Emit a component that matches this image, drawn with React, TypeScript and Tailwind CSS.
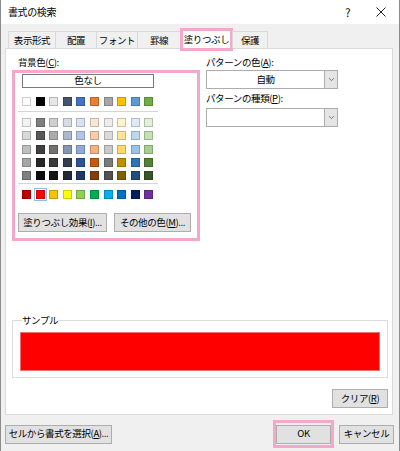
import { ChevronDown } from "lucide-react";

const themeRow = ["#ffffff", "#000000", "#e7e6e6", "#44546a", "#4472c4", "#ed7d31", "#a5a5a5", "#ffc000", "#5b9bd5", "#70ad47"];

const tintRows = [
  ["#f2f2f2", "#7f7f7f", "#d0cece", "#d6dce4", "#d9e2f3", "#fbe5d5", "#ededed", "#fff2cc", "#deebf6", "#e2efd9"],
  ["#d8d8d8", "#595959", "#aeabab", "#adb9ca", "#b4c6e7", "#f7cbac", "#dbdbdb", "#fee599", "#bdd7ee", "#c5e0b3"],
  ["#bfbfbf", "#3f3f3f", "#757070", "#8496b0", "#8eaadb", "#f4b183", "#c9c9c9", "#ffd965", "#9cc3e5", "#a8d08d"],
  ["#a5a5a5", "#262626", "#3a3838", "#323f4f", "#2f5496", "#c55a11", "#7b7b7b", "#bf9000", "#2e75b5", "#538135"],
  ["#7f7f7f", "#0c0c0c", "#171616", "#222a35", "#1f3864", "#833c0b", "#525252", "#7f6000", "#1e4e79", "#375623"],
];

const standardRow = ["#c00000", "#ff0000", "#ffc000", "#ffff00", "#92d050", "#00b050", "#00b0f0", "#0070c0", "#002060", "#7030a0"];

const tabs = [
  { label: "表示形式", w: "w-[48px]" },
  { label: "配置", w: "w-[42px]" },
  { label: "フォント", w: "w-[42px]" },
  { label: "罫線", w: "w-[44px]" },
  { label: "塗りつぶし", w: "w-[53px]", active: true },
  { label: "保護", w: "w-[36px]" },
];

function SwatchRow({ colors, selected }: { colors: string[]; selected?: number }) {
  return (
    <div className="flex gap-x-[4.6px] ml-[7px]">
      {colors.map((c, i) => (
        <div
          key={i}
          className={
            i === selected
              ? "w-[9px] h-[9px] border border-black/20 outline outline-1 outline-offset-1 outline-[#8fc1ea]"
              : "w-[9px] h-[9px] border border-black/20"
          }
          style={{ backgroundColor: c }}
        />
      ))}
    </div>
  );
}

function Button({ children, className }: { children: React.ReactNode; className?: string }) {
  return (
    <div
      className={
        "flex items-center justify-center bg-[#e1e1e1] border border-[#adadad] leading-none " +
        (className ?? "")
      }
    >
      {children}
    </div>
  );
}

function Select({ value }: { value?: string }) {
  return (
    <div className="flex w-[132px] h-[19px] bg-white border border-[#acacac]">
      <div className="flex-1 flex items-center justify-center">{value}</div>
      <div className="w-[13px] flex items-center justify-center bg-[#e5e5e5] border-l border-[#acacac]">
        <ChevronDown className="w-[9px] h-[9px] text-[#555]" strokeWidth={2} />
      </div>
    </div>
  );
}

export default function App() {
  return (
    <div className="w-[400px] h-[451px] bg-[#f0f0f0] border-x border-[#8c8c8c] text-[9.5px] tracking-[-0.4px] whitespace-nowrap text-black font-['Noto_Sans_CJK_JP','Noto_Sans',sans-serif] overflow-hidden">
      {/* title bar */}
      <div className="h-[24px] bg-white flex items-center pl-[7px]">
        <span className="leading-none text-[10px]">書式の検索</span>
        <span className="ml-auto mr-[26px] text-[11px] leading-none">?</span>
        <svg className="w-[10px] h-[10px] mr-[13px]" viewBox="0 0 10 10" stroke="#222" strokeWidth="1">
          <path d="M0.5 0.5 L9.5 9.5 M9.5 0.5 L0.5 9.5" />
        </svg>
      </div>

      {/* tabs */}
      <div className="mt-[4px] h-[23px] flex items-end pl-[7px] -mb-[3px] relative z-10">
        {tabs.map((t) =>
          t.active ? (
            <div
              key={t.label}
              className={`${t.w} h-[23px] -ml-px bg-white border-[3px] border-[#f3a9c9] flex items-center justify-center`}
            >
              {t.label}
            </div>
          ) : (
            <div
              key={t.label}
              className={`${t.w} h-[17px] mb-[3px] -ml-px first:ml-0 bg-[#f0f0f0] border-t border-x border-[#d9d9d9] flex items-center justify-center`}
            >
              {t.label}
            </div>
          )
        )}
      </div>

      {/* tab page */}
      <div className="ml-[4px] w-[388px] h-[367px] bg-white border border-[#d9d9d9] flex flex-col">
        <div className="flex">
          {/* background colour */}
          <div className="ml-[6px] pt-[7px]">
            <div className="h-[13px] leading-[13px] pl-[6px]">
              背景色(<u>C</u>):
            </div>
            <div className="mt-[1px] w-[188px] h-[171px] border-[3px] border-[#f3a9c9] flex flex-col pt-[1px]">
              <div className="ml-[7px] w-[132px] h-[14px] bg-white border border-[#7a7a7a] flex items-center justify-center leading-none">
                色なし
              </div>
              <div className="mt-[9px]">
                <SwatchRow colors={themeRow} />
              </div>
              <div className="mt-[5px] ml-[3px] w-[140px] h-px bg-[#d5d5d5]" />
              <div className="mt-[6px] flex flex-col gap-y-[4.3px]">
                {tintRows.map((row, i) => (
                  <SwatchRow key={i} colors={row} />
                ))}
              </div>
              <div className="mt-[3px] ml-[3px] w-[140px] h-px bg-[#d5d5d5]" />
              <div className="mt-[6px]">
                <SwatchRow colors={standardRow} selected={1} />
              </div>
              <div className="mt-[14px] ml-[3px] flex gap-[7px]">
                <Button className="w-[89px] h-[19px]">
                  塗りつぶし効果(<u>I</u>)...
                </Button>
                <Button className="w-[77px] h-[19px]">
                  その他の色(<u>M</u>)...
                </Button>
              </div>
            </div>
          </div>

          {/* pattern */}
          <div className="ml-[6px] pt-[7px]">
            <div className="h-[13px] leading-[13px]">
              パターンの色(<u>A</u>):
            </div>
            <div className="mt-[1px]">
              <Select value="自動" />
            </div>
            <div className="mt-[3px] h-[13px] leading-[13px]">
              パターンの種類(<u>P</u>):
            </div>
            <div className="mt-[3px]">
              <Select />
            </div>
          </div>
        </div>

        {/* sample */}
        <fieldset className="mt-auto ml-[6px] mr-[4px] h-[64px] border border-[#dcdcdc] px-[7px] pb-[6px]">
          <legend className="ml-[2px] leading-[13px]">サンプル</legend>
          <div className="mt-[5px] h-[39px] bg-[#ff0000] border border-[#f27070]" />
        </fieldset>

        <div className="mt-[11px] mb-[6px] mr-[4px] flex justify-end">
          <Button className="w-[56px] h-[19px]">
            クリア(<u>R</u>)
          </Button>
        </div>
      </div>

      {/* dialog buttons */}
      <div className="mt-[5px] h-[28px] flex items-center pl-[4px] pr-[5px]">
        <Button className="w-[107px] h-[19px]">
          セルから書式を選択(<u>A</u>)...
        </Button>
        <div className="ml-auto w-[61px] h-[28px] border-[3px] border-[#f3a9c9] flex items-center justify-center">
          <Button className="w-[55px] h-[19px] border-[#0078d7]">OK</Button>
        </div>
        <Button className="ml-[5px] w-[55px] h-[19px]">キャンセル</Button>
      </div>
    </div>
  );
}
